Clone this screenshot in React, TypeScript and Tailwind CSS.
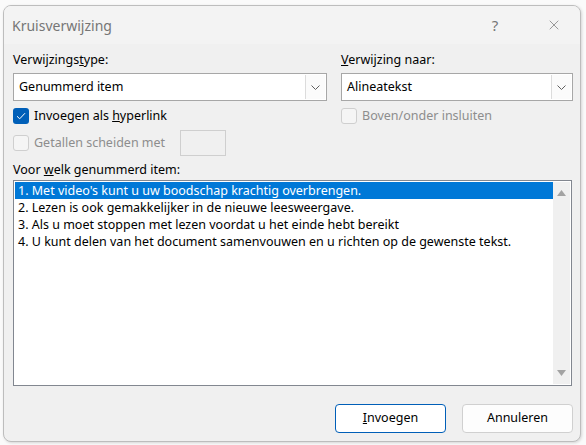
import { X } from 'lucide-react';

const font = { fontFamily: '"Noto Sans", "Segoe UI", sans-serif' };

function Chevron() {
  return (
    <svg width="9" height="5" viewBox="0 0 9 5" className="text-[#606060]">
      <path d="M0.5 0.5 L4.5 4.5 L8.5 0.5" fill="none" stroke="currentColor" strokeWidth="1" />
    </svg>
  );
}

function Combo({ value, className }: { value: string; className: string }) {
  return (
    <div className={`flex h-[28px] items-stretch border border-[#a7a7a7] bg-white ${className}`}>
      <div className="flex flex-1 items-center pl-[5px] text-[12.5px] text-black">{value}</div>
      <div className="my-[1px] mr-[1px] flex w-[20px] items-center justify-center border-l border-[#dcdcdc] bg-[#fbfbfb]">
        <Chevron />
      </div>
    </div>
  );
}

function Check({ checked, disabled }: { checked?: boolean; disabled?: boolean }) {
  if (checked) {
    return (
      <div className="flex h-[16px] w-[16px] items-center justify-center rounded-[3px] bg-[#005fb8]">
        <svg width="10" height="8" viewBox="0 0 10 8">
          <path d="M1 4.2 L3.7 6.8 L9 1.2" fill="none" stroke="white" strokeWidth="1" />
        </svg>
      </div>
    );
  }
  return (
    <div
      className={`h-[16px] w-[16px] rounded-[3px] border ${disabled ? 'border-[#cfcfcf] bg-[#f5f5f5]' : 'border-[#8a8a8a] bg-white'}`}
    />
  );
}

const items = [
  "1. Met video's kunt u uw boodschap krachtig overbrengen.",
  '2. Lezen is ook gemakkelijker in de nieuwe leesweergave.',
  '3. Als u moet stoppen met lezen voordat u het einde hebt bereikt',
  '4. U kunt delen van het document samenvouwen en u richten op de gewenste tekst.',
];

export default function App() {
  return (
    <div className="h-[445px] w-[586px] bg-[#fafafa] pl-[3px] pt-[5px]" style={font}>
      <div className="flex h-[437px] w-[578px] flex-col overflow-hidden rounded-[8px] border border-[#bdbdbd] bg-[#f0f0f0] shadow-[1px_1px_3px_rgba(0,0,0,0.15)]">
        {/* Titel */}
        <div className="flex h-[38px] shrink-0 items-center bg-[#f3f3f3] pl-[8px]">
          <span className="flex-1 text-[14px] text-[#767676]">Kruisverwijzing</span>
          <span className="w-[20px] text-center text-[15px] text-[#767676]">?</span>
          <div className="ml-[39px] mr-[16px] flex w-[20px] items-center justify-center">
            <X className="h-[16px] w-[16px] text-[#6a6a6a]" strokeWidth={1} />
          </div>
        </div>

        <div className="flex flex-1 flex-col pl-[9px] pr-[6px] text-[12.5px] text-black">
          {/* Bovenste velden */}
          <div className="mt-[8px] flex gap-[14px]">
            <div className="flex w-[314px] flex-col">
              <div className="h-[16px] leading-[16px]">
                Verwijzings<span className="underline">t</span>ype:
              </div>
              <Combo value="Genummerd item" className="mt-[5px] w-[314px]" />
              <div className="mt-[7px] flex h-[16px] items-center gap-[5px]">
                <Check checked />
                <span>
                  Invoegen als <span className="underline">h</span>yperlink
                </span>
              </div>
              <div className="mt-[6px] flex h-[26px] items-center">
                <Check disabled />
                <span className="ml-[5px] text-[#8d8d8d]">Getallen scheiden met</span>
                <div className="ml-auto mr-[101px] h-[26px] w-[46px] border border-[#cfcfcf] bg-[#f0f0f0]" />
              </div>
            </div>
            <div className="flex w-[232px] flex-col">
              <div className="h-[16px] leading-[16px]">
                <span className="underline">V</span>erwijzing naar:
              </div>
              <Combo value="Alineatekst" className="mt-[5px] w-[232px]" />
              <div className="mt-[7px] flex h-[16px] items-center gap-[5px]">
                <Check disabled />
                <span className="text-[#8d8d8d]">Boven/onder insluiten</span>
              </div>
            </div>
          </div>

          <div className="mt-[6px] h-[16px] leading-[16px]">
            Voor <span className="underline">w</span>elk genummerd item:
          </div>

          {/* Lijst */}
          <div className="mt-[2px] flex h-[206px] w-[559px] border border-[#828790] bg-white p-[1px]">
            <div className="flex flex-1 flex-col">
              {items.map((t, i) => (
                <div
                  key={i}
                  className={`h-[17px] whitespace-nowrap pl-[3px] leading-[17px] ${i === 0 ? 'bg-[#0078d7] text-white' : 'text-black'}`}
                >
                  {t}
                </div>
              ))}
            </div>
            <div className="flex w-[17px] flex-col items-center justify-between bg-[#f0f0f0] py-[8px]">
              <svg width="9" height="6" viewBox="0 0 9 6">
                <path d="M4.5 0 L9 6 L0 6 Z" fill="#a3a3a3" />
              </svg>
              <svg width="9" height="6" viewBox="0 0 9 6">
                <path d="M0 0 L9 0 L4.5 6 Z" fill="#a3a3a3" />
              </svg>
            </div>
          </div>

          {/* Knoppen */}
          <div className="mt-[18px] flex justify-end gap-[16px] pr-[1px]">
            <button className="h-[29px] w-[111px] rounded-[4px] border border-[#005fb8] bg-white text-[12.5px] text-black">
              <span className="underline">I</span>nvoegen
            </button>
            <button className="h-[29px] w-[111px] rounded-[4px] border border-[#d0d0d0] bg-[#fdfdfd] text-[12.5px] text-black">
              Annuleren
            </button>
          </div>
        </div>
      </div>
    </div>
  );
}
